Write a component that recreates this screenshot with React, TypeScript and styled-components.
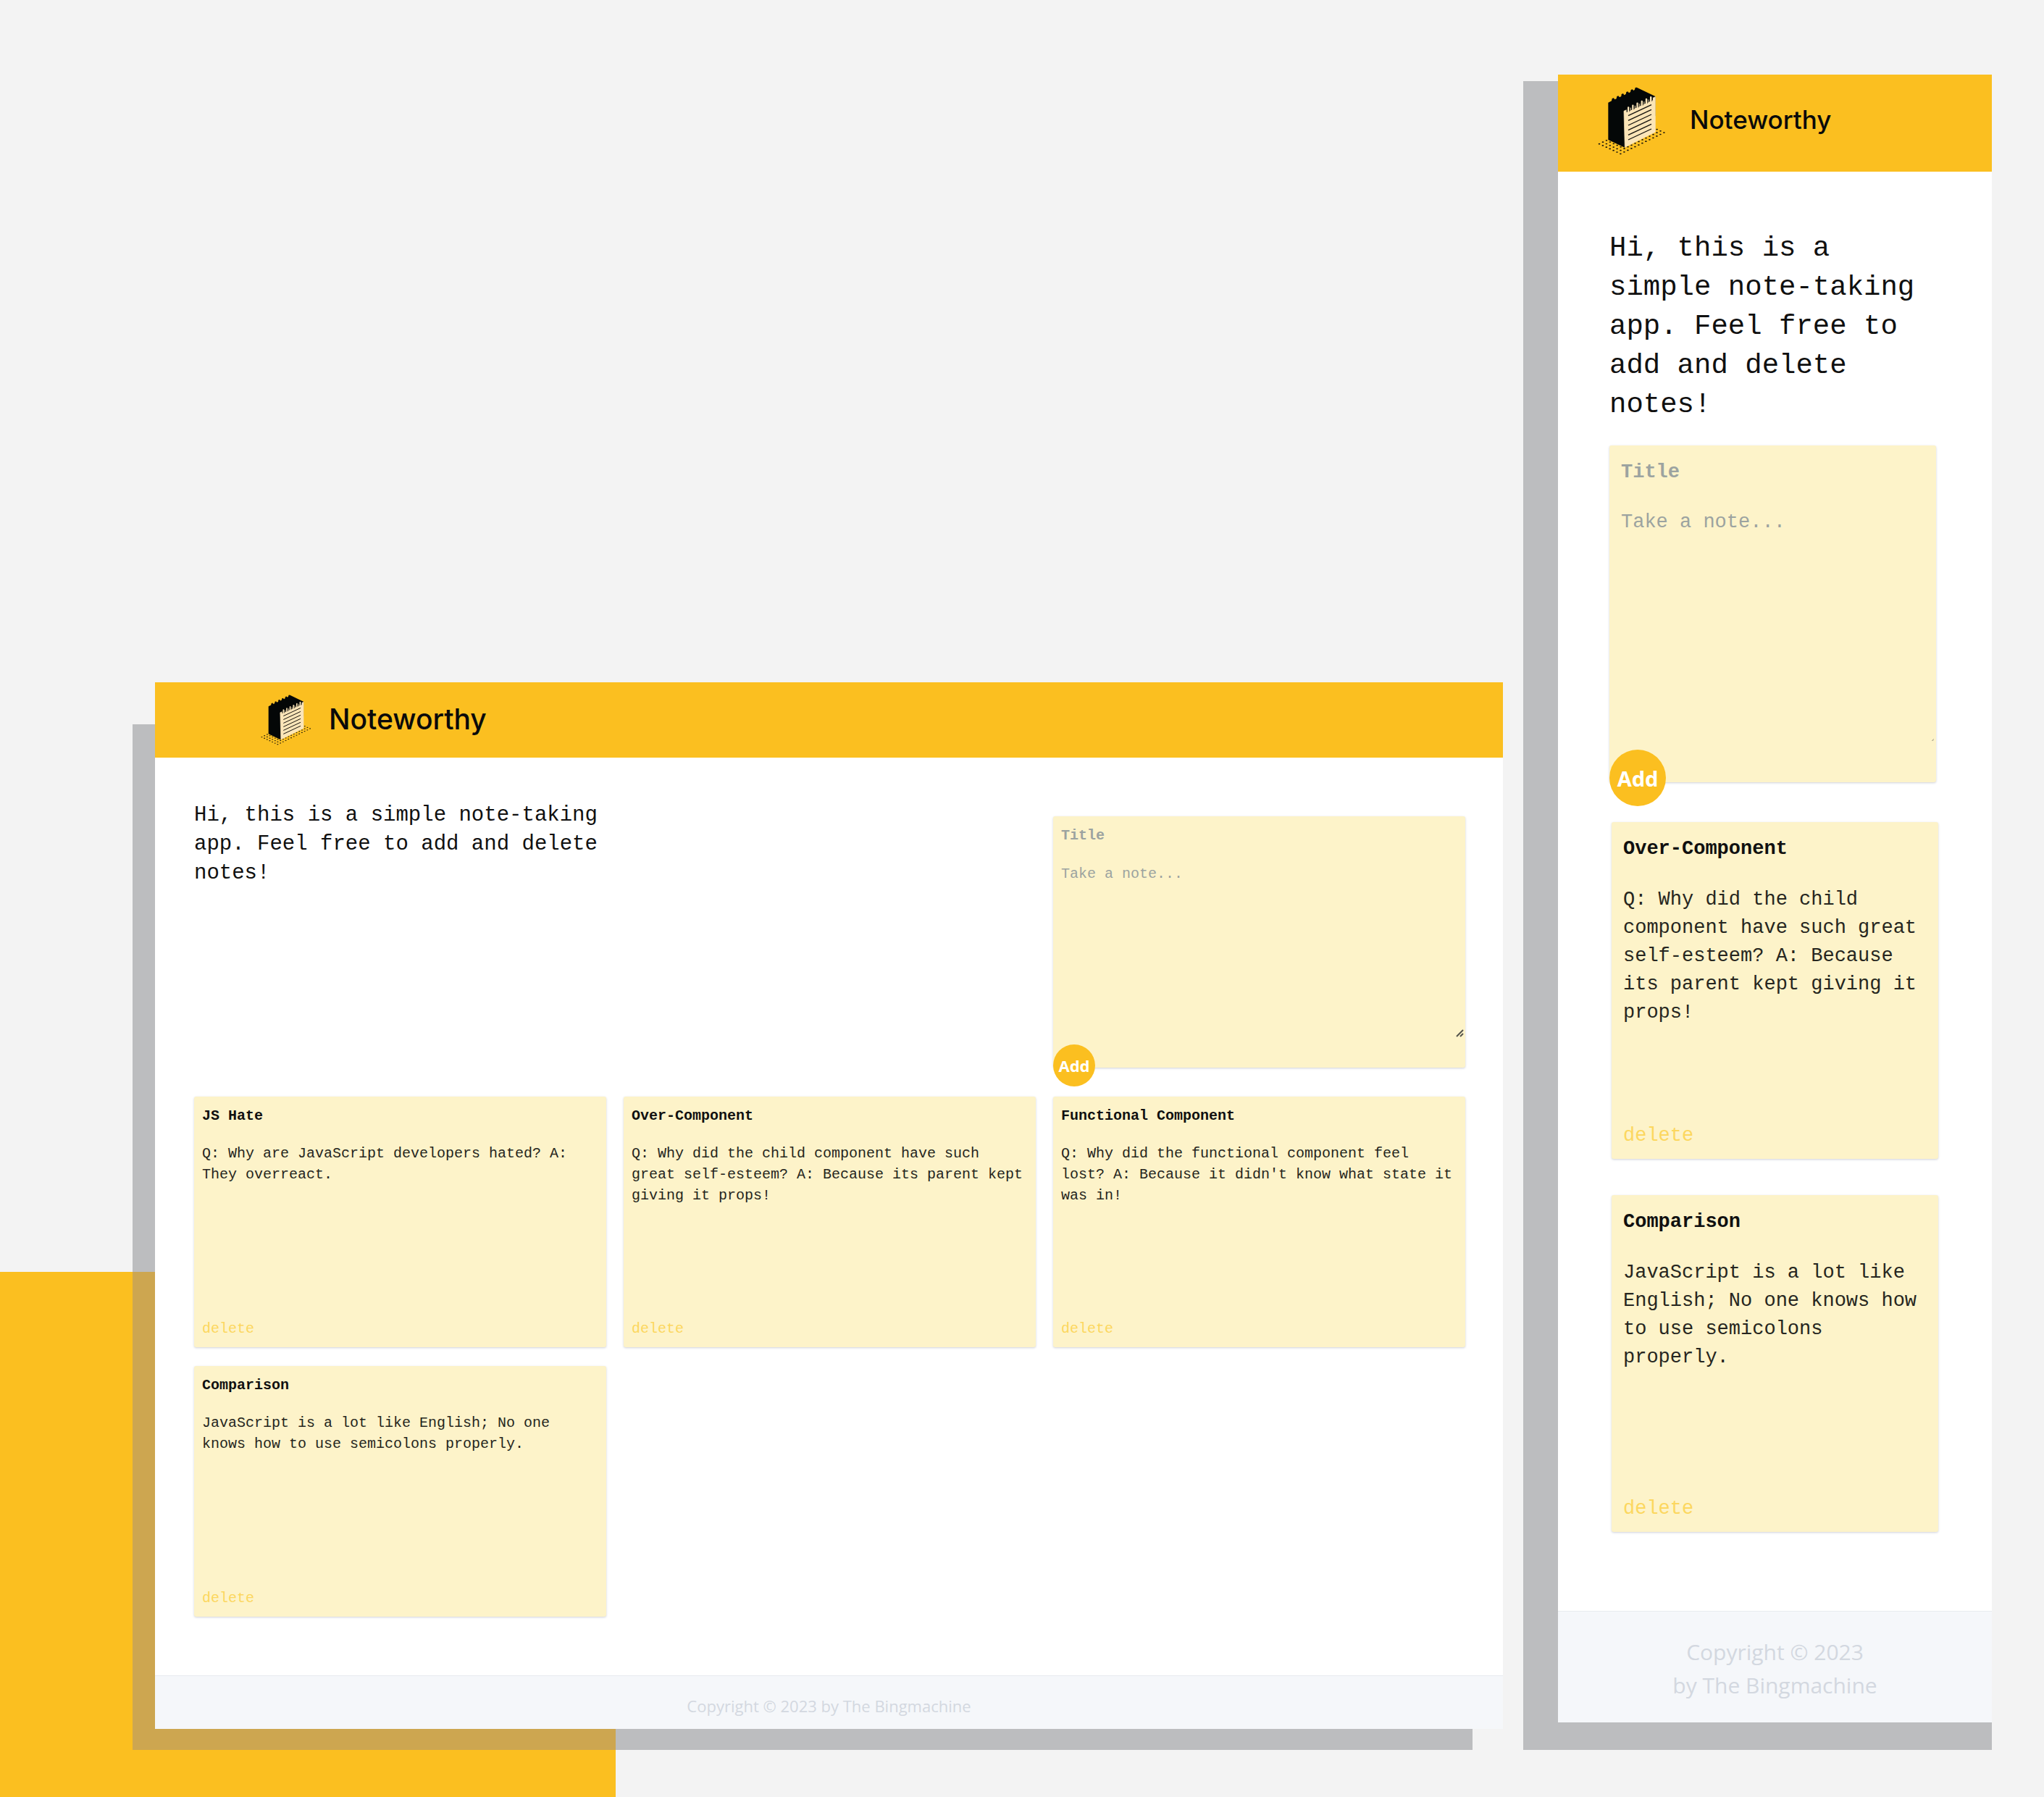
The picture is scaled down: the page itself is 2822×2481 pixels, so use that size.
import React from "react";
import styled, { createGlobalStyle, css, ThemeProvider } from "styled-components";

/* ---------- tokens ---------- */

const colors = {
  stage: "#f3f3f3",
  amber: "#fbbf20",
  amberShade: "#cda650",
  shade: "#bcbdbf",
  note: "#fdf3c9",
  remove: "#fcd75f",
  ink: "#101010",
  hint: "#9ca3a0",
  footer: "#f5f7fa",
  footerLine: "#e8ebef",
  footerText: "#d3d8e0",
};

const mono = `"Liberation Mono", monospace`;

const wide = {
  compact: false,
  header: { height: 104, left: 146, top: 17, logo: 70, gap: 24, font: 39, line: 68 },
  main: { padding: "60px 52px 81px 54px" },
  columns: 3,
  intro: { font: 29, line: 40 },
  composer: { offset: 21, height: 347, top: 12, gap: 24, bottom: 40 },
  list: { offset: 40, gap: "26px 24px", indent: 0 },
  card: { height: 346, side: 11, top: 12, bottom: 11, gap: 23, font: 20, line: 29 },
  add: { size: 58, drop: 26, font: 22 },
  grip: { size: 11, right: 2, bottom: 42 },
  footer: { padding: "25px 24px 16px", font: 22, line: 32 },
};

const compact: typeof wide = {
  compact: true,
  header: { height: 134, left: 55, top: 17, logo: 94, gap: 33, font: 35, line: 90 },
  main: { padding: "79px 77px 109px 71px" },
  columns: 1,
  intro: { font: 39, line: 54 },
  composer: { offset: 29, height: 465, top: 18, gap: 30, bottom: 54 },
  list: { offset: 55, gap: "50px", indent: 3 },
  card: { height: 465, side: 16, top: 18, bottom: 12, gap: 31, font: 27, line: 39 },
  add: { size: 78, drop: 33, font: 29 },
  grip: { size: 3, right: 3, bottom: 57 },
  footer: { padding: "33px 24px 28px", font: 30, line: 46 },
};

type Metrics = typeof wide;
const m = (p: { theme: any }) => p.theme as Metrics;

/* ---------- styles ---------- */

const GlobalStyle = createGlobalStyle`
  *, *::before, *::after { box-sizing: border-box; }
  body { margin: 0; background: ${colors.stage}; }
  h1, h2, p { margin: 0; }
`;

const Stage = styled.div`
  position: relative;
  isolation: isolate;
  display: flex;
  align-items: flex-end;
  gap: 76px;
  min-height: 100vh;
  padding: 103px 72px 94px 214px;
  background: ${colors.stage};

  &::before {
    content: "";
    position: absolute;
    z-index: -1;
    left: 0;
    bottom: 0;
    width: 850px;
    height: 725px;
    background: ${colors.amber};
  }
`;

const Window = styled.article`
  position: relative;
  background: #fff;
  color: ${colors.ink};

  &::before {
    content: "";
    position: absolute;
    z-index: -1;
    background: ${colors.shade};
  }

  ${(p) =>
    m(p).compact
      ? css`
          flex: 0 0 599px;
          margin-bottom: 9px;
          &::before {
            inset: 9px 0 -38px -48px;
          }
        `
      : css`
          flex: 1 1 0;
          min-width: 0;
          &::before {
            inset: 58px 42px -29px -31px;
            background: linear-gradient(${colors.amberShade}, ${colors.amberShade})
                left bottom / 667px 660px no-repeat,
              ${colors.shade};
          }
        `}
`;

const Header = styled.header`
  display: flex;
  align-items: flex-start;
  gap: ${(p) => m(p).header.gap}px;
  height: ${(p) => m(p).header.height}px;
  padding: ${(p) => m(p).header.top}px 24px 0 ${(p) => m(p).header.left}px;
  background: ${colors.amber};
`;

const LogoArt = styled.svg`
  display: block;
  flex: none;
  width: ${(p) => m(p).header.logo}px;
  height: ${(p) => m(p).header.logo}px;
`;

const Brand = styled.h1`
  font: 500 ${(p) => m(p).header.font}px / ${(p) => m(p).header.line}px Inter, sans-serif;
  color: #0a0a0a;
`;

const Main = styled.main`
  padding: ${(p) => m(p).main.padding};
`;

const Hero = styled.section`
  display: grid;
  grid-template-columns: repeat(${(p) => m(p).columns}, minmax(0, 1fr));
  column-gap: 24px;
  align-items: start;
`;

const Intro = styled.p`
  font: ${(p) => m(p).intro.font}px / ${(p) => m(p).intro.line}px ${mono};
`;

const paper = css`
  position: relative;
  display: flex;
  flex-direction: column;
  border-radius: 3px;
  background: ${colors.note};
  box-shadow: 0 1px 3px rgba(30, 41, 80, 0.22);
  font: ${(p) => m(p).card.font}px / ${(p) => m(p).card.line}px ${mono};
`;

const Composer = styled.form`
  ${paper}
  grid-column: -2 / -1;
  height: ${(p) => m(p).composer.height}px;
  margin-top: ${(p) => m(p).composer.offset}px;
  padding: ${(p) => m(p).composer.top}px 0 ${(p) => m(p).composer.bottom}px;
  gap: ${(p) => m(p).composer.gap}px;
`;

const Grip = styled.svg`
  position: absolute;
  right: ${(p) => m(p).grip.right}px;
  bottom: ${(p) => m(p).grip.bottom}px;
  width: ${(p) => m(p).grip.size}px;
  height: ${(p) => m(p).grip.size}px;
  pointer-events: none;
`;

const field = css`
  display: block;
  width: 100%;
  margin: 0;
  padding: 0 ${(p) => m(p).card.side}px;
  border: 0;
  outline: 0;
  background: transparent;
  color: ${colors.ink};
  font: inherit;

  &::placeholder {
    color: ${colors.hint};
    opacity: 1;
  }
`;

const TitleField = styled.input`
  ${field}
  flex: none;
  height: ${(p) => m(p).card.line}px;
  font-weight: 700;
`;

const NoteField = styled.textarea`
  ${field}
  flex: 1;
  resize: none;
`;

const AddButton = styled.button`
  position: absolute;
  left: 0;
  bottom: -${(p) => m(p).add.drop}px;
  display: grid;
  place-items: center;
  width: ${(p) => m(p).add.size}px;
  height: ${(p) => m(p).add.size}px;
  padding: 0;
  border: 0;
  border-radius: 50%;
  background: ${colors.amber};
  color: #fff;
  font: 700 ${(p) => m(p).add.font}px "Noto Sans", sans-serif;
  cursor: pointer;
`;

const NoteList = styled.section`
  display: grid;
  grid-template-columns: repeat(${(p) => m(p).columns}, minmax(0, 1fr));
  gap: ${(p) => m(p).list.gap};
  margin: ${(p) => m(p).list.offset}px -${(p) => m(p).list.indent}px 0
    ${(p) => m(p).list.indent}px;
`;

const Card = styled.article`
  ${paper}
  min-height: ${(p) => m(p).card.height}px;
  padding: ${(p) => m(p).card.top}px ${(p) => m(p).card.side}px
    ${(p) => m(p).card.bottom}px;
`;

const CardTitle = styled.h2`
  font: inherit;
  font-weight: 700;
`;

const CardText = styled.p`
  margin-top: ${(p) => m(p).card.gap}px;
  color: #262620;
`;

const DeleteButton = styled.button`
  align-self: flex-start;
  margin-top: auto;
  padding: 0;
  border: 0;
  background: none;
  color: ${colors.remove};
  font: inherit;
  cursor: pointer;
`;

const Footer = styled.footer`
  padding: ${(p) => m(p).footer.padding};
  border-top: 1px solid ${colors.footerLine};
  background: ${colors.footer};
  color: ${colors.footerText};
  text-align: center;
  font: ${(p) => m(p).footer.font}px / ${(p) => m(p).footer.line}px "Open Sans", sans-serif;
`;

const FooterPart = styled.span`
  display: ${(p) => (m(p).compact ? "block" : "inline")};
`;

/* ---------- logo ---------- */

const dots = Array.from({ length: 7 }, (_, i) =>
  Array.from({ length: 13 }, (_, j) => ({
    x: 84 + i * 14.7 + j * 15,
    y: 296 + i * 6.8 - j * 7.3,
  }))
).flat();

const rings = [0, 1, 2, 3, 4, 5];

function Logo() {
  return (
    <LogoArt viewBox="78 60 282 282" aria-hidden="true">
      {dots.map((d) => (
        <ellipse key={`${d.x}-${d.y}`} cx={d.x} cy={d.y} rx="4" ry="2.6" fill="#17130a" />
      ))}
      <path
        fill="#040707"
        d="M121 125 L135 118 L137 108 L144 106 L148 112 L155 109 L157 99 L163 97 L168 103 L175 99 L176 90 L183 87 L187 94 L194 90 L196 81 L202 79 L207 85 L213 81 L215 72 L221 70 L226 75 L231 71 L233 63 L239 62 L316 99 L316 180 L189 311 L121 279 Z"
      />
      <path fill="#fbe5b8" stroke="#fbe5b8" strokeWidth="2" d="M186 160 L316 101 L316 247 L190 310 Z" />
      {rings.map((i) => (
        <g key={i} transform={`translate(${205 + i * 18.6} ${153 - i * 8.6})`}>
          <path d="M-8 12 V-4 L-1 -12 H8 V5 Z" fill="#040707" />
          <rect x="-4" y="-11" width="7" height="24" rx="3.5" fill="#fbe5b8" />
          <path d="M4 -8 V10" stroke="#6d6450" strokeWidth="3" />
        </g>
      ))}
      {rings.map((i) => (
        <path
          key={i}
          d={`M204 ${179 + i * 20} L300 ${134 + i * 20}`}
          stroke="#14120d"
          strokeWidth="4"
        />
      ))}
    </LogoArt>
  );
}

function ResizeGrip() {
  return (
    <Grip viewBox="0 0 11 11" aria-hidden="true">
      <path
        d="M1 10 L10 1 M6 10 L10 6"
        stroke="#55544c"
        strokeWidth="2"
        fill="none"
      />
    </Grip>
  );
}

/* ---------- app ---------- */

type Note = { title: string; text: string };

const jsHate: Note = {
  title: "JS Hate",
  text: "Q: Why are JavaScript developers hated? A: They overreact.",
};
const overComponent: Note = {
  title: "Over-Component",
  text: "Q: Why did the child component have such great self-esteem? A: Because its parent kept giving it props!",
};
const functional: Note = {
  title: "Functional Component",
  text: "Q: Why did the functional component feel lost? A: Because it didn't know what state it was in!",
};
const comparison: Note = {
  title: "Comparison",
  text: "JavaScript is a lot like English; No one knows how to use semicolons properly.",
};

function NotesApp({ metrics, initial }: { metrics: Metrics; initial: Note[] }) {
  const [notes, setNotes] = React.useState(initial);
  const [title, setTitle] = React.useState("");
  const [text, setText] = React.useState("");

  const add = (e: React.FormEvent) => {
    e.preventDefault();
    if (!title && !text) return;
    setNotes([...notes, { title, text }]);
    setTitle("");
    setText("");
  };

  return (
    <ThemeProvider theme={metrics}>
      <Window>
        <Header>
          <Logo />
          <Brand>Noteworthy</Brand>
        </Header>
        <Main>
          <Hero>
            <Intro>
              Hi, this is a simple note-taking app. Feel free to add and delete notes!
            </Intro>
            <Composer onSubmit={add}>
              <TitleField
                aria-label="Title"
                placeholder="Title"
                value={title}
                onChange={(e) => setTitle(e.target.value)}
              />
              <NoteField
                aria-label="Take a note"
                placeholder="Take a note..."
                value={text}
                onChange={(e) => setText(e.target.value)}
              />
              <ResizeGrip />
              <AddButton type="submit">Add</AddButton>
            </Composer>
          </Hero>
          <NoteList>
            {notes.map((note, i) => (
              <Card key={i}>
                <CardTitle>{note.title}</CardTitle>
                <CardText>{note.text}</CardText>
                <DeleteButton
                  type="button"
                  onClick={() => setNotes(notes.filter((_, n) => n !== i))}
                >
                  delete
                </DeleteButton>
              </Card>
            ))}
          </NoteList>
        </Main>
        <Footer>
          <FooterPart>Copyright © 2023 </FooterPart>
          <FooterPart>by The Bingmachine</FooterPart>
        </Footer>
      </Window>
    </ThemeProvider>
  );
}

export default function App() {
  return (
    <>
      <GlobalStyle />
      <Stage>
        <NotesApp metrics={wide} initial={[jsHate, overComponent, functional, comparison]} />
        <NotesApp metrics={compact} initial={[overComponent, comparison]} />
      </Stage>
    </>
  );
}
